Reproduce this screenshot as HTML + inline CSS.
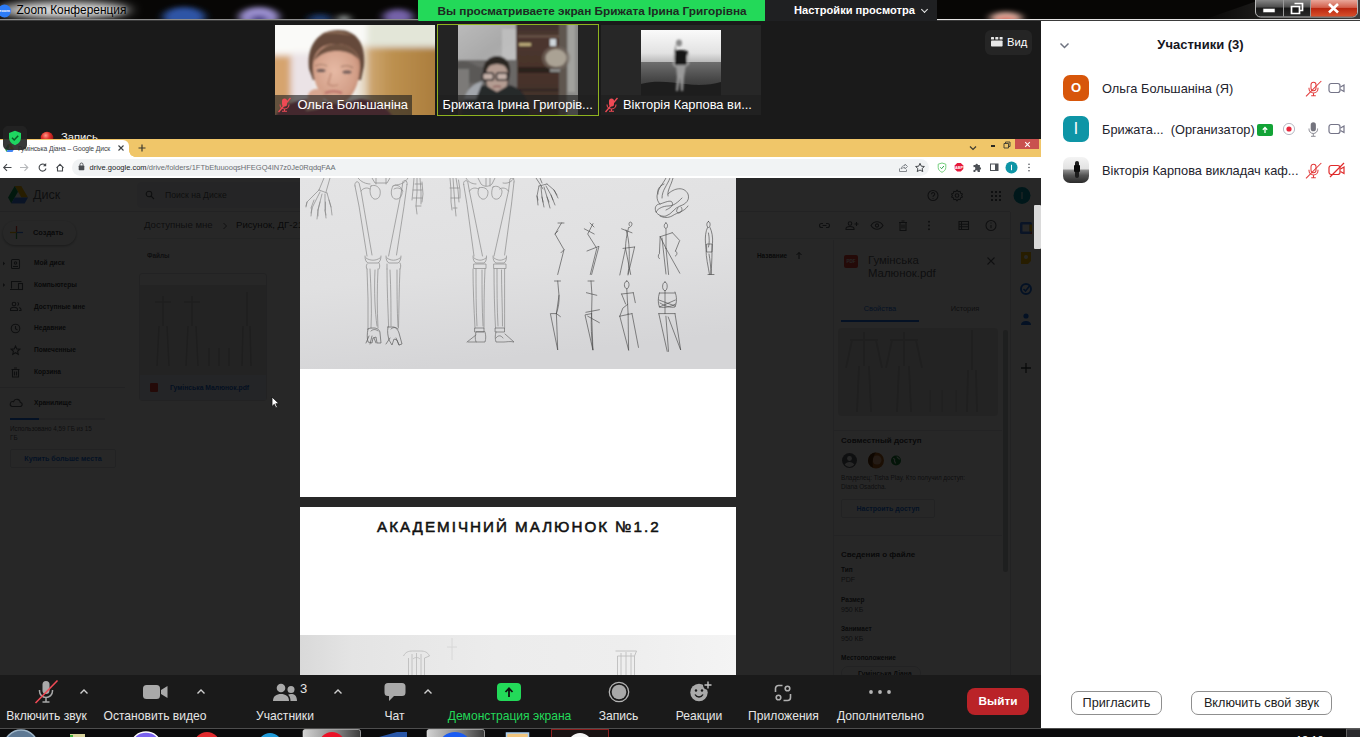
<!DOCTYPE html>
<html lang="ru">
<head>
<meta charset="utf-8">
<title>Zoom Конференция</title>
<style>
*{box-sizing:border-box;margin:0;padding:0}
html,body{width:1360px;height:737px;overflow:hidden;background:#1a1a1a;font-family:"Liberation Sans","DejaVu Sans",sans-serif;}
.abs{position:absolute}
#root{position:relative;width:1360px;height:737px;overflow:hidden;background:#1a1a1a}
/* title bar */
#titlebar{left:0;top:0;width:1360px;height:21px;background:#060606;overflow:hidden}
#titlebar .line{left:0;top:19px;width:1360px;height:2px;background:linear-gradient(#b9b9b9,#3a3a3a)}
#ttl{left:16.500px;top:1px;font-size:11.900px;color:#000;line-height:18px;white-space:nowrap;text-shadow:0 0 3px rgba(255,255,255,.5)}
#banner{left:418px;top:0;width:347px;height:22px;background:#23d959;color:#1d2b22;font-weight:bold;font-size:11.780px;line-height:21px;text-align:left;padding-left:19.500px;white-space:nowrap;border-radius:0 0 0 3px}
#viewopt{left:765px;top:0;width:172px;height:22px;background:#1f2022;color:#fff;font-weight:bold;font-size:11.100px;line-height:21px;white-space:nowrap;padding-left:29px}
#viewopt:after{content:"";position:absolute;left:157px;top:7px;width:4px;height:4px;border-right:1.600px solid #e8e8e8;border-bottom:1.600px solid #e8e8e8;transform:rotate(45deg)}
/* main */
#main{left:0;top:21px;width:1041px;height:654px;background:#1a1a1a}
/* panel */
#panel{left:1041px;top:21px;width:319px;height:707px;background:#fff}
/* toolbar */
#toolbar{left:0;top:675px;width:1041px;height:53px;background:#1a1a1a}
.tl{position:absolute;top:32.500px;font-size:12.100px;color:#e6e6e6;white-space:nowrap;transform:translateX(-50%);line-height:16px}
.nav{position:absolute;left:34px;font-size:6.600px;line-height:10px;font-weight:bold;color:#3c4043;white-space:nowrap}
.dl{left:841px;font-size:7px;line-height:9.700px;color:#5f6368;white-space:nowrap}.dl b{color:#3c4043;font-size:6.500px}
.av{left:22px;width:26px;height:26px;border-radius:7px;color:#fff;font-weight:bold;font-size:13px;line-height:26px;text-align:center}
.pn{left:61px;font-size:12.800px;line-height:20px;color:#23232d;white-space:nowrap}
.pb{top:670px;height:24px;border:1px solid #8f8f8f;border-radius:7px;font-size:12.700px;line-height:23px;text-align:center;color:#222;white-space:nowrap;background:#fff}
.lb{top:70px;height:20px;background:rgba(30,30,30,.62);color:#fff;font-size:12.880px;line-height:20px;white-space:nowrap;overflow:hidden}
/* taskbar */
#taskbar{left:0;top:728px;width:1360px;height:9px;background:#0b0b0c;overflow:hidden}
</style>
</head>
<body>
<div id="root">

<!-- ===== TITLE BAR ===== -->
<div id="titlebar" class="abs">
  <svg class="abs" style="left:0;top:0" width="1360" height="21" viewBox="0 0 1360 21">
   <defs><filter id="tb" x="-10%" y="-100%" width="120%" height="300%"><feGaussianBlur stdDeviation="4 2.500"/></filter><filter id="tg" x="-10%" y="-100%" width="120%" height="300%"><feGaussianBlur stdDeviation="7 4"/></filter>
   <linearGradient id="shine" x1="0" y1="0" x2="1" y2="0"><stop offset="0" stop-color="#fff" stop-opacity="0"/><stop offset="1" stop-color="#fff" stop-opacity=".22"/></linearGradient></defs>
   <rect width="1360" height="21" fill="#070605"/>
   <g filter="url(#tg)"><ellipse cx="64" cy="10" rx="66" ry="9" fill="#bdbdbd"/><ellipse cx="70" cy="10.500" rx="54" ry="6" fill="#dcdcdc"/></g>
   <g filter="url(#tb)"><ellipse cx="184" cy="17" rx="21" ry="10" fill="#2d55a6"/><ellipse cx="259" cy="17" rx="20" ry="10" fill="#9d92d2"/><ellipse cx="259" cy="20" rx="9" ry="5" fill="#4a3f86"/><ellipse cx="320" cy="19" rx="12" ry="5" fill="#1f3a6e"/><ellipse cx="344" cy="19" rx="6" ry="4" fill="#9aa0a0"/><ellipse cx="398" cy="17" rx="15" ry="8" fill="#7562a8"/><ellipse cx="1006" cy="18" rx="16" ry="6" fill="#e6b8a8"/><ellipse cx="1006" cy="20" rx="10" ry="3" fill="#d0564a"/></g>
   <path d="M1200 21L1260 0h100v21z" fill="url(#shine)"/>
   <rect x="0" y="19" width="1360" height="1" fill="#8d8d8d"/><rect x="0" y="20" width="1360" height="1" fill="#3b3b3b"/>
   <rect x="937" y="19" width="423" height="1" fill="#e4e4e4"/>
   <!-- zoom app icon -->
   <circle cx="4.500" cy="11" r="6.500" fill="#2d7cf6"/><text x="4.500" y="12.300" font-size="4.200" font-weight="bold" fill="#fff" text-anchor="middle" font-family="Liberation Sans, sans-serif">zoom</text>
   <!-- window controls -->
   <defs><linearGradient id="wcg" x1="0" y1="0" x2="0" y2="1"><stop offset="0" stop-color="#8d8d8d"/><stop offset=".45" stop-color="#4c4c4c"/><stop offset=".5" stop-color="#161616"/><stop offset="1" stop-color="#2a2a2a"/></linearGradient><linearGradient id="wcr" x1="0" y1="0" x2="0" y2="1"><stop offset="0" stop-color="#e9a79a"/><stop offset=".45" stop-color="#d2604c"/><stop offset=".5" stop-color="#b9260f"/><stop offset="1" stop-color="#d7502c"/></linearGradient></defs>
   <path d="M1255.500 -1v13a5 5 0 0 0 5 5h92a5 5 0 0 0 5-5V-1z" fill="url(#wcg)" stroke="#b9b9b9" stroke-width="1"/>
   <path d="M1311 0v16.500h41.500a4.500 4.500 0 0 0 4.500-4.500V0z" fill="url(#wcr)"/>
   <path d="M1283.500 0v16.500M1310.500 0v16.500" stroke="#9a9a9a" stroke-width="1"/>
   <rect x="1263" y="8.500" width="12" height="4" rx=".8" fill="#fff" stroke="#3a3a3a" stroke-width=".6"/>
   <path d="M1294.500 3.500h8v7h-2.500M1291.500 6.500h8v7h-8z" fill="none" stroke="#fff" stroke-width="1.700"/>
   <path d="M1329 4l9 8.500M1338 4l-9 8.500" stroke="#fff" stroke-width="2.600"/>
  </svg>
  <div id="ttl" class="abs">Zoom Конференция</div>
</div>
<div id="banner" class="abs">Вы просматриваете экран Брижата Ірина Григорівна</div>
<div id="viewopt" class="abs">Настройки просмотра</div>

<!-- ===== MAIN ===== -->
<div id="main" class="abs">
<div id="thumbs" class="abs" style="left:0;top:-21px;width:1041px;height:160px">
 <!-- thumb 1 -->
 <div class="abs" style="left:275px;top:25px;width:160px;height:90px;overflow:hidden;background:#e9e4dc">
  <svg class="abs" style="left:0;top:0" width="160" height="90" viewBox="0 0 160 90">
   <defs><filter id="b1" x="-20%" y="-20%" width="140%" height="140%"><feGaussianBlur stdDeviation="3"/></filter><filter id="b2" x="-20%" y="-20%" width="140%" height="140%"><feGaussianBlur stdDeviation="1.300"/></filter><filter id="b3" x="-20%" y="-20%" width="140%" height="140%"><feGaussianBlur stdDeviation=".8"/></filter>
   <linearGradient id="wd" x1="0" x2="1"><stop offset="0" stop-color="#d2ad7c"/><stop offset=".35" stop-color="#bd9150"/><stop offset="1" stop-color="#a87a3a"/></linearGradient>
   <radialGradient id="fc" cx=".45" cy=".45" r=".65"><stop offset="0" stop-color="#e6b9a4"/><stop offset=".7" stop-color="#d39f88"/><stop offset="1" stop-color="#b98068"/></radialGradient></defs>
   <rect width="160" height="90" fill="#efece8"/>
   <g filter="url(#b1)"><rect x="-5" y="-5" width="100" height="42" fill="#fafaf8"/><rect x="88" y="22" width="80" height="75" fill="url(#wd)"/><rect x="92" y="-4" width="70" height="25" fill="#e3e6d8"/><rect x="-6" y="30" width="24" height="66" fill="#d6a46e"/><rect x="16" y="28" width="24" height="50" fill="#ebe3e6"/><rect x="84" y="20" width="8" height="60" fill="#e6d9c4"/></g>
   <g filter="url(#b2)"><path d="M34 44c-3-24 10-39 29-39 18 0 28 13 26 36l-3 14H38z" fill="#65493a"/><path d="M46 9c8-4 22-4 32 2-8-2-24-3-32-2z" fill="#8a6a55"/><path d="M38 42c0-15 8-23 23-23 14 0 24 8 24 22 0 18-9 38-23 38S38 60 38 42z" fill="url(#fc)"/><path d="M39 36c3-11 12-17 23-17 10 0 19 5 22 16-6-7-14-9-22-9s-16 2-23 10z" fill="#6f5242"/><path d="M0 92c6-12 20-17 38-18l24 5 24-5c16 2 26 8 32 18z" fill="#80374a"/><path d="M33 70c2-6 9-8 14-4l2 8-6 10-12 2z" fill="#d8a690"/></g>
   <g filter="url(#b3)"><ellipse cx="46" cy="45.500" rx="4.500" ry="1.600" fill="#5a4a4a" opacity=".85"/><ellipse cx="72" cy="47" rx="4.500" ry="1.600" fill="#5a4a4a" opacity=".85"/><path d="M40 41c4-2 8-2 12 0M66 42c4-2 9-1.500 12 1" stroke="#8a6654" stroke-width="1.200" fill="none" opacity=".7"/><path d="M56 48l-3 11c2 2 7 2.500 10 .5" fill="none" stroke="#b57f6a" stroke-width="1.300" opacity=".8"/><path d="M50 68c5-2 12-2 17 0" stroke="#b0605e" stroke-width="2" fill="none" opacity=".8"/></g>
  </svg>
  <div class="abs lb" style="left:0;width:137px;padding-left:22.500px">Ольга Большаніна</div>
  <svg class="abs" style="left:2px;top:72px" width="15" height="16" viewBox="0 0 15 16"><rect x="5" y="1.500" width="5" height="8" rx="2.500" fill="#ef4a55"/><path d="M3 7.500a4.500 4.500 0 0 0 9 0M7.500 12v2M5 14.300h5" fill="none" stroke="#ef4a55" stroke-width="1.100"/><path d="M13.500 1L1.500 15" stroke="#ef4a55" stroke-width="1.300"/></svg>
 </div>
 <!-- thumb 2 -->
 <div class="abs" style="left:437px;top:24px;width:162px;height:92px;border:1px solid #8eb31f;background:#232323;overflow:hidden">
  <svg class="abs" style="left:20px;top:0" width="120" height="90" viewBox="0 0 120 90">
   <defs><linearGradient id="wl" x1="0" y1="0" x2="1" y2="1"><stop offset="0" stop-color="#bcbcbc"/><stop offset=".6" stop-color="#a9a9a9"/><stop offset="1" stop-color="#b8b8b8"/></linearGradient>
   <linearGradient id="cb" x1="0" y1="0" x2="0" y2="1"><stop offset="0" stop-color="#3a302e"/><stop offset=".15" stop-color="#4c362f"/><stop offset=".5" stop-color="#49332b"/><stop offset="1" stop-color="#3e2f28"/></linearGradient></defs>
   <rect width="120" height="90" fill="#46352e"/>
   <g filter="url(#b2)"><rect x="-3" y="-3" width="62" height="45" fill="url(#wl)"/><rect x="44" y="4" width="14" height="30" fill="#c4c4c4" opacity=".7"/><rect x="58" y="-3" width="52" height="96" fill="url(#cb)"/><rect x="60" y="10.500" width="46" height="1.800" fill="#6d5a4e"/><rect x="60" y="42" width="48" height="6" fill="#2a201c"/><rect x="60" y="64" width="48" height="2" fill="#2e2420"/><rect x="108" y="-3" width="15" height="96" fill="#8c8c8a"/><rect x="110" y="-3" width="7" height="70" fill="#a2a29e"/><rect x="101" y="-3" width="8" height="96" fill="#5e5650"/><ellipse cx="98" cy="33" rx="14" ry="12" fill="#7a6e64" opacity=".6"/><ellipse cx="98" cy="33" rx="10.500" ry="9" fill="#aaa294"/><rect x="92" y="14" width="6" height="7" fill="#cfd6da"/><rect x="61" y="18" width="12" height="3" fill="#b9a878"/><rect x="92" y="44" width="10" height="3" fill="#8a8a88"/><rect x="-3" y="35" width="62" height="42" fill="#6a6866"/><path d="M-3 38c8-3 14-2 20 2s12 2 18-2v20H-3z" fill="#5a5856"/><rect x="-3" y="44" width="14" height="30" fill="#7c7a78"/><path d="M25 47c0-11 7-16 14-16s14 5 13 17l-2 12H28z" fill="#2c2624"/><path d="M28 51c0-9 5-13 11-13s11 4 11 13c0 10-4 19-11 19S28 61 28 51z" fill="#b49c92"/><path d="M26 45c2-8 7-12 13-12s11 4 13 12c-4-4-8-6-13-6s-9 2-13 6z" fill="#2c2624"/><path d="M3 95c0-22 10-32 24-35l12 7 12-7c13 3 20 12 21 35z" fill="#28292c"/><path d="M6 74c3-10 10-16 19-18l-7 18z" fill="#a2a6ac"/><rect x="24.500" y="48" width="11" height="7" rx="1.800" fill="#c4b0a8" stroke="#1c1a1a" stroke-width="1.600"/><rect x="38.500" y="48" width="11" height="7" rx="1.800" fill="#c4b0a8" stroke="#1c1a1a" stroke-width="1.600"/><path d="M35 62c3-1 6-1 8 0" stroke="#8a5a58" stroke-width="1.500" fill="none"/></g>
  </svg>
  <div class="abs lb" style="left:0;top:70px;width:160px;padding-left:4.500px">Брижата Ірина Григорів...</div>
 </div>
 <!-- thumb 3 -->
 <div class="abs" style="left:601px;top:25px;width:160px;height:90px;overflow:hidden;background:#272727">
  <svg class="abs" style="left:40px;top:5px" width="80" height="66" viewBox="0 0 80 66">
   <defs><linearGradient id="sky" x1="0" y1="0" x2="0" y2="1"><stop offset="0" stop-color="#fafafa"/><stop offset=".7" stop-color="#e2e2e2"/><stop offset="1" stop-color="#b5b5b5"/></linearGradient><linearGradient id="sea" x1="0" y1="0" x2="0" y2="1"><stop offset="0" stop-color="#6e6e6e"/><stop offset=".5" stop-color="#484848"/><stop offset="1" stop-color="#2c2c2c"/></linearGradient></defs>
   <rect width="80" height="33" fill="url(#sky)"/><rect y="32" width="80" height="34" fill="url(#sea)"/>
   <path d="M0 54c14-4 30-2 44 0s26 1 36-2v14H0z" fill="#1d1d1d"/>
   <g filter="url(#b2)"><ellipse cx="38" cy="13" rx="3" ry="3.500" fill="#8a8a8a"/><path d="M34.500 14c-1 6-1.500 12-1 16l2.500 1z" fill="#6a6a6a"/><path d="M33.500 21c3-1.500 9-1.500 13 0l1 4-2 1v9H34z" fill="#141414"/><path d="M35 35h10l-2 12-1 14h-2l-1-14-2 14h-2l1-14z" fill="#9a9a9a"/><path d="M33.500 22l-1 12 2 3M46.500 24l1 9-2 3" fill="none" stroke="#b5b5b5" stroke-width="1.300"/></g>
  </svg>
  <div class="abs lb" style="left:0;width:160px;padding-left:22px">Вікторія Карпова ви...</div>
  <svg class="abs" style="left:3px;top:72px" width="15" height="16" viewBox="0 0 15 16"><rect x="5" y="1.500" width="5" height="8" rx="2.500" fill="#ef4a55"/><path d="M3 7.500a4.500 4.500 0 0 0 9 0M7.500 12v2M5 14.300h5" fill="none" stroke="#ef4a55" stroke-width="1.100"/><path d="M13.500 1L1.500 15" stroke="#ef4a55" stroke-width="1.300"/></svg>
 </div>
 <!-- view button -->
 <div class="abs" style="left:985px;top:30px;width:47px;height:25px;border-radius:6px;background:#252525"></div>
 <svg class="abs" style="left:991px;top:37px" width="12" height="10" viewBox="0 0 12 10" fill="#e8e8e8"><rect x="0" y="0" width="3" height="2.500" rx=".5"/><rect x="4.300" y="0" width="3" height="2.500" rx=".5"/><rect x="8.600" y="0" width="3" height="2.500" rx=".5"/><rect x="0" y="3.500" width="11.600" height="6" rx=".8"/></svg>
 <div class="abs" style="left:1007px;top:34px;font-size:11.200px;line-height:16px;color:#fff">Вид</div>
 <!-- recording indicator (behind shared window) -->
 <div class="abs" style="left:3px;top:126px;width:24px;height:24px;border-radius:5px;background:rgba(36,36,36,.9);z-index:5"></div>
 <svg class="abs" style="left:8px;top:130px;z-index:6" width="14" height="16" viewBox="0 0 14 16"><path d="M7 .8l6 2.200v4.500c0 3.800-2.500 6.300-6 7.700-3.500-1.400-6-3.900-6-7.700V3z" fill="#1ed760"/><path d="M4 7.800l2.200 2.200 4-4.300" fill="none" stroke="#0b5a26" stroke-width="1.500"/></svg>
 <svg class="abs" style="left:40px;top:131px" width="14" height="14" viewBox="0 0 14 14"><defs><radialGradient id="rb" cx=".4" cy=".3" r=".7"><stop offset="0" stop-color="#ff9a8a"/><stop offset=".45" stop-color="#e0302a"/><stop offset="1" stop-color="#8a1010"/></radialGradient></defs><circle cx="7" cy="7" r="6.300" fill="url(#rb)"/></svg>
 <div class="abs" style="left:61px;top:129px;font-size:11.200px;line-height:16px;color:#f2f2f2">Запись</div>
</div>

<div id="share" class="abs" style="left:0;top:-21px;width:1041px;height:696px;clip-path:inset(139px 0 0 0);">
 <!-- chrome tab strip -->
 <div class="abs" style="left:0;top:139px;width:1041px;height:18px;background:#f0c669"></div>
 <div class="abs" style="left:0;top:140px;width:129px;height:18px;background:#fff;border-radius:0 6px 0 0"></div>
 <div class="abs" style="left:127px;top:151px;width:8px;height:6px;background:radial-gradient(circle at 100% 0,#f0c669 5.5px,#fff 6px)"></div>
 <svg class="abs" style="left:5px;top:144px" width="9" height="8" viewBox="0 0 9 8"><path d="M3 0h3l3 5.2H6z" fill="#fbbc04"/><path d="M3 0L0 5.2 1.5 8l3-5.2z" fill="#34a853"/><path d="M1.5 8h6L9 5.2H3z" fill="#4285f4"/></svg>
 <div class="abs" style="left:18px;top:142.700px;font-size:6.740px;line-height:12px;color:#3c4043;white-space:nowrap;letter-spacing:-.1px">Гумінська Діана – Google Диск</div>
 <svg class="abs" style="left:117px;top:144px" width="8" height="8" viewBox="0 0 8 8"><path d="M1.5 1.5l5 5M6.500 1.500l-5 5" stroke="#3c4043" stroke-width="1.100" fill="none"/></svg>
 <svg class="abs" style="left:138px;top:144px" width="8" height="8" viewBox="0 0 8 8"><path d="M4 .5v7M.5 4h7" stroke="#3c3a30" stroke-width="1.200" fill="none"/></svg>
 <!-- window controls -->
 <svg class="abs" style="left:969px;top:145px" width="8" height="6" viewBox="0 0 8 6"><path d="M1 1.500l3 3 3-3" stroke="#3c3a30" stroke-width="1.200" fill="none"/></svg>
 <div class="abs" style="left:991px;top:145px;width:4px;height:1.500px;background:#2b2a22"></div>
 <svg class="abs" style="left:1003px;top:141px" width="8" height="8" viewBox="0 0 8 8"><path d="M1 2.500h4.500v4.500H1zM2.500 2.500V1h4.500v4.500H5.500" stroke="#3c3a30" stroke-width=".9" fill="none"/></svg>
 <div class="abs" style="left:1015px;top:139px;width:24px;height:10px;background:#c9514f"></div>
 <svg class="abs" style="left:1024px;top:141px" width="7" height="7" viewBox="0 0 7 7"><path d="M1.200 1.200l4.600 4.600M5.800 1.200L1.200 5.800" stroke="#fff" stroke-width="1.100" fill="none"/></svg>
 <!-- chrome toolbar -->
 <div class="abs" style="left:0;top:157px;width:1041px;height:21px;background:#fff"></div>
 <div class="abs" style="left:72px;top:159px;width:857px;height:17px;border-radius:9px;background:#f1f3f4"></div>
 <svg class="abs" style="left:1px;top:161px" width="70" height="13" viewBox="0 0 70 13">
  <g fill="none" stroke="#45484c" stroke-width="1.100"><path d="M10.500 6.500H3M6 3.200L2.700 6.500 6 9.800"/><path d="M19 6.500h7.500M23.500 3.200l3.300 3.300-3.300 3.300" stroke="#b6b8bb"/><path d="M44.200 4.200A3.500 3.500 0 1 0 45 7.500"/><path d="M55.500 6.800L59 3.300l3.500 3.500M56.500 6v4h5V6"/></g><path d="M45.200 2v3.200H42z" fill="#45484c"/></svg>
 <svg class="abs" style="left:78px;top:162px" width="7" height="9" viewBox="0 0 7 9"><rect x=".7" y="3.600" width="5.600" height="4.700" rx=".7" fill="#4b4e52"/><path d="M2 3.800V2.500a1.500 1.500 0 0 1 3 0v1.300" fill="none" stroke="#4b4e52" stroke-width=".9"/></svg>
 <div class="abs" style="left:89.500px;top:161.500px;font-size:7.500px;line-height:12px;color:#202124;white-space:nowrap">drive.google.com<span style="color:#6a6e73">/drive/folders/1FTbEfuuooqsHFEGQ4IN7z0Je0RqdqFAA</span></div>
 <svg class="abs" style="left:896px;top:160px" width="142" height="15" viewBox="0 0 142 15">
  <g fill="none" stroke="#5f6368" stroke-width="1"><path d="M3.500 8.500v3h7v-2M5 9c.5-2.500 2-3.500 4-3.500V4l2.500 2.500L9 9V7.500C7.500 7.500 6 8 5 9z" stroke="#85898e"/><path d="M24 3.300l1.300 2.900 3.100.3-2.300 2.100.7 3-2.800-1.600-2.800 1.600.7-3-2.300-2.100 3.100-.3z" stroke="#45484c"/></g>
  <path d="M46 3l3.800 1.200v3.300c0 2.300-1.700 3.800-3.800 4.800-2.100-1-3.800-2.500-3.800-4.800V4.200z" fill="#fff" stroke="#67c96f" stroke-width=".9"/><path d="M44.300 7.300l1.300 1.400 2.300-2.700" stroke="#2fa34a" stroke-width="1" fill="none"/>
  <path d="M61.200 3h3.600l2.500 2.500v3.600l-2.500 2.500h-3.600l-2.500-2.500V5.500z" fill="#e6183b"/><text x="63" y="9" font-size="3.800" font-weight="bold" fill="#fff" text-anchor="middle" font-family="Liberation Sans, sans-serif">ABP</text>
  <path d="M77.500 5h2a1.200 1.200 0 1 1 2.400 0h2v2.200a1.200 1.200 0 1 1 0 2.400V12h-2.300a1.200 1.200 0 1 0-2.200 0h-1.900V9.700a1.300 1.300 0 1 0 0-2.400z" fill="#4d5156"/>
  <rect x="94.500" y="4" width="7.500" height="6.500" fill="#fff" stroke="#4d5156" stroke-width="1"/><rect x="99" y="4" width="3" height="6.500" fill="#4d5156"/>
  <circle cx="115.500" cy="7.500" r="6" fill="#0e95a6"/><rect x="115" y="4.800" width="1" height="5.400" fill="#fff"/>
  <circle cx="133" cy="4.300" r=".8" fill="#4d5156"/><circle cx="133" cy="7.500" r=".8" fill="#4d5156"/><circle cx="133" cy="10.700" r=".8" fill="#4d5156"/>
 </svg>
 <!-- drive page (light) -->
 <div class="abs" id="drive" style="left:0;top:178px;width:1041px;height:497px;background:#fff;overflow:hidden;color:#5f6368">
  <div class="abs" style="left:0;top:0;width:1041px;height:497px;transform:translateY(-178px)">
   <!-- header -->
   <svg class="abs" style="left:8px;top:186px" width="20" height="18" viewBox="0 0 20 18"><path d="M6.700 0h6.600L20 11.600h-6.600z" fill="#fbbc04"/><path d="M6.700 0L0 11.600 3.300 17.400 10 5.800z" fill="#0f9d58"/><path d="M3.300 17.400h13.400L20 11.600H6.600z" fill="#4285f4"/></svg>
   <div class="abs" style="left:33px;top:187px;font-size:12.500px;line-height:16px;color:#5f6368">Диск</div>
   <div class="abs" style="left:137px;top:182px;width:390px;height:26px;border-radius:4px;background:#f1f3f4"></div>
   <svg class="abs" style="left:145px;top:190px" width="10" height="10" viewBox="0 0 10 10"><circle cx="4" cy="4" r="2.800" fill="none" stroke="#5f6368" stroke-width="1.100"/><path d="M6 6l3 3" stroke="#5f6368" stroke-width="1.100"/></svg>
   <div class="abs" style="left:165px;top:189px;font-size:8.600px;line-height:12px;color:#5f6368;white-space:nowrap">Поиск на Диске</div>
   <div class="abs" style="left:0;top:211px;width:1010px;height:1px;background:#dadce0"></div>
   <!-- create -->
   <div class="abs" style="left:3px;top:221px;width:73px;height:24px;border-radius:12px;background:#fff;box-shadow:0 1px 2px rgba(60,64,67,.3),0 1px 3px 1px rgba(60,64,67,.15)"></div>
   <svg class="abs" style="left:10px;top:226px" width="13" height="13" viewBox="0 0 13 13"><path d="M6.500 0v6.500" stroke="#ea4335" stroke-width="1.300"/><path d="M6.500 6.500V13" stroke="#34a853" stroke-width="1.300"/><path d="M0 6.500h6.500" stroke="#fbbc04" stroke-width="1.300"/><path d="M6.500 6.500H13" stroke="#4285f4" stroke-width="1.300"/></svg>
   <div class="abs" style="left:33px;top:227px;font-size:7.400px;line-height:11px;color:#3c4043;font-weight:bold">Создать</div>
   <!-- nav -->
   <div class="nav" style="top:258px">Мой диск</div>
   <div class="nav" style="top:280px">Компьютеры</div>
   <div class="nav" style="top:302px">Доступные мне</div>
   <div class="nav" style="top:323px">Недавние</div>
   <div class="nav" style="top:345px">Помеченные</div>
   <div class="nav" style="top:367px">Корзина</div>
   <div class="abs" style="left:0;top:387px;width:125px;height:1px;background:#dadce0"></div>
   <div class="nav" style="top:398px">Хранилище</div>
   <svg class="abs" style="left:2px;top:257px" width="26" height="156" viewBox="0 0 26 156" fill="none" stroke="#5f6368" stroke-width="1.100">
    <path d="M1 4.500l2.200 2-2.200 2z" fill="#5f6368" stroke="none"/><rect x="9.500" y="2.500" width="8" height="9" rx="1"/><path d="M11 9.500h5"/><circle cx="13.500" cy="6" r="1.200"/>
    <path d="M1 26l2.200 2-2.200 2z" fill="#5f6368" stroke="none"/><path d="M9.500 31.500v-7h10M8 32.500h8"/><rect x="16.500" y="26.500" width="4" height="6"/>
    <circle cx="12" cy="47" r="1.800"/><path d="M8.500 53.500v-1c0-1.500 2-2.200 3.500-2.200s3.500.7 3.500 2.200v1zM15.500 45.500c1.500.5 1.500 2.500 0 3M17 53.500h2v-1c0-1-.8-1.600-1.800-2"/>
    <circle cx="13.500" cy="71.500" r="4.300"/><path d="M13.500 69v2.800l2 1.200"/>
    <path d="M13.500 89l1.300 2.900 3.100.3-2.300 2.100.7 3-2.800-1.600-2.800 1.600.7-3-2.300-2.100 3.100-.3z"/>
    <path d="M10.500 112.500h6v7.500h-6zM9.500 112.500h8M12 111h3M12.500 114.500v4M14.500 114.500v4"/>
    <path d="M10 149.500h8a2 2 0 0 0 .3-4 3.500 3.500 0 0 0-6.800-.8A2.500 2.500 0 0 0 10 149.500z"/>
   </svg>
   <div class="abs" style="left:10px;top:418px;width:95px;height:2px;background:#e4e6ea"></div>
   <div class="abs" style="left:10px;top:418px;width:29px;height:2px;background:#1a73e8"></div>
   <div class="abs" style="left:10px;top:425px;width:84px;font-size:6.300px;line-height:8.500px;color:#5f6368">Использовано 4,59 ГБ из 15 ГБ</div>
   <div class="abs" style="left:10px;top:449px;width:106px;height:19px;border:1px solid #dadce0;border-radius:2px;font-size:7.200px;line-height:17px;color:#1a73e8;font-weight:bold;text-align:center;white-space:nowrap">Купить больше места</div>
   <!-- breadcrumbs -->
   <div class="abs" style="left:144px;top:219px;font-size:9.600px;line-height:12px;color:#5f6368;white-space:nowrap">Доступные мне</div>
   <svg class="abs" style="left:222px;top:222px" width="6" height="8" viewBox="0 0 6 8"><path d="M1.500 1l3 3-3 3" fill="none" stroke="#5f6368" stroke-width="1"/></svg>
   <div class="abs" style="left:236px;top:219px;font-size:9.600px;line-height:12px;color:#3c4043;white-space:nowrap">Рисунок, ДГ-21</div>
   <div class="abs" style="left:137px;top:238px;width:873px;height:1px;background:#e6e8eb"></div>
   <div class="abs" style="left:147px;top:251px;font-size:6.400px;line-height:9px;color:#5f6368;font-weight:bold">Файлы</div>
   <!-- file card -->
   <div class="abs" style="left:139px;top:273px;width:128px;height:128px;border:1px solid #dadce0;border-radius:3px;background:#fff"></div>
   <div class="abs" style="left:140px;top:285px;width:126px;height:90px;background:#e4e4e4"></div>
   <div class="abs" style="left:140px;top:375px;width:126px;height:25px;background:#e8f0fe"></div>
   <div class="abs" style="left:150px;top:383px;width:8px;height:9px;border-radius:1px;background:#ea4335"></div>
   <div class="abs" style="left:170px;top:383px;font-size:6.800px;line-height:10px;color:#1967d2;font-weight:bold;white-space:nowrap">Гумінська Малюнок.pdf</div>
   <svg class="abs" style="left:143px;top:288px" width="122" height="86" viewBox="0 0 122 86" fill="none" stroke="#9a9a9a" stroke-width="1.600" opacity=".45"><path d="M20 8v30M12 14h16M16 38l-2 40M24 38l2 40M49 8v30M41 14h16M45 38l-2 40M53 38l2 40M104 4v34M100 38l-1 40M107 38l1 40M66 60v18M76 60v18M86 60v18"/></svg>
   <!-- top right icons -->
   <svg class="abs" style="left:925px;top:187px" width="110" height="17" viewBox="0 0 110 17" fill="none" stroke="#5f6368" stroke-width="1.100">
    <circle cx="8" cy="8.500" r="5"/><path d="M6.500 7.200a1.600 1.600 0 1 1 2.300 1.400c-.6.300-.8.700-.8 1.300M8 11.200v.9"/>
    <circle cx="32" cy="8.500" r="1.800"/><path d="M32 3.200l1.200 1.500 1.900-.4.500 1.900 1.800.8-.8 1.500.8 1.500-1.800.8-.5 1.900-1.900-.4-1.200 1.500-1.200-1.500-1.900.4-.5-1.900-1.800-.8.800-1.500-.8-1.500 1.800-.8.500-1.900 1.900.4z"/>
    <g fill="#5f6368" stroke="none"><rect x="66" y="4" width="2" height="2"/><rect x="70" y="4" width="2" height="2"/><rect x="74" y="4" width="2" height="2"/><rect x="66" y="8" width="2" height="2"/><rect x="70" y="8" width="2" height="2"/><rect x="74" y="8" width="2" height="2"/><rect x="66" y="12" width="2" height="2"/><rect x="70" y="12" width="2" height="2"/><rect x="74" y="12" width="2" height="2"/></g>
    <circle cx="97" cy="8.500" r="8.500" fill="#0097a7" stroke="none"/><rect x="96.500" y="5" width="1" height="7" fill="#fff" stroke="none"/>
   </svg>
   <!-- action icons -->
   <svg class="abs" style="left:815px;top:217px" width="186" height="17" viewBox="0 0 186 17" fill="none" stroke="#5f6368" stroke-width="1.100">
    <path d="M8 6.500H6.500a2 2 0 0 0 0 4H8M11 6.500h1.500a2 2 0 0 1 0 4H11M7.500 8.500h4"/>
    <circle cx="35" cy="6.500" r="1.800"/><path d="M31 12.500v-.8c0-1.500 2.500-2.200 4-2.200s4 .7 4 2.200v.8zM41.500 5v4M39.500 7h4"/>
    <path d="M56 8.500c1.500-2.500 3.500-3.700 6-3.700s4.500 1.200 6 3.700c-1.500 2.500-3.500 3.700-6 3.700s-4.500-1.200-6-3.700z"/><circle cx="62" cy="8.500" r="1.600"/>
    <path d="M85 5.500h6v8h-6zM84 5.500h8M86.500 4h3M87 7.500v4M89 7.500v4"/>
    <g fill="#5f6368" stroke="none"><circle cx="114" cy="4.700" r="1"/><circle cx="114" cy="8.500" r="1"/><circle cx="114" cy="12.300" r="1"/></g>
    <path d="M144 4.500h9.500v8H144zM144 7.200h9.500M144 9.800h9.500M146.500 4.500v8"/>
    <circle cx="176" cy="8.500" r="5"/><path d="M176 8v3.300M176 5.600v1"/>
   </svg>
   <div class="abs" style="left:757px;top:251px;font-size:6.400px;line-height:9px;color:#3c4043;font-weight:bold">Название</div>
   <svg class="abs" style="left:795px;top:251px" width="8" height="9" viewBox="0 0 8 9"><path d="M4 8V1.500M1.500 4L4 1.500 6.500 4" fill="none" stroke="#3c4043" stroke-width="1"/></svg>
   <!-- details panel -->
   <div class="abs" style="left:833px;top:240px;width:176px;height:440px;background:#fff;border-left:1px solid #e3e5e8"></div>
   <div class="abs" style="left:844px;top:255px;width:14px;height:13px;border-radius:2px;background:#ea4335;color:#fff;font-size:4.500px;line-height:13px;font-weight:bold;text-align:center">PDF</div>
   <div class="abs" style="left:868px;top:254px;font-size:11.400px;line-height:13px;color:#5f6368;width:110px">Гумінська Малюнок.pdf</div>
   <svg class="abs" style="left:986px;top:256px" width="10" height="10" viewBox="0 0 10 10"><path d="M1.500 1.500l7 7M8.500 1.500l-7 7" stroke="#5f6368" stroke-width="1.100" fill="none"/></svg>
   <div class="abs" style="left:841px;top:303px;width:78px;text-align:center;font-size:7.400px;line-height:11px;color:#1a73e8">Свойства</div>
   <div class="abs" style="left:926px;top:303px;width:78px;text-align:center;font-size:7.400px;line-height:11px;color:#5f6368">История</div>
   <div class="abs" style="left:841px;top:320px;width:78px;height:2px;background:#1a73e8"></div>
   <div class="abs" style="left:838px;top:328px;width:160px;height:88px;border-radius:3px;background:#e6e6e6;overflow:hidden">
    <svg class="abs" style="left:0;top:0" width="160" height="88" viewBox="0 0 160 88" fill="none" stroke="#a2a2a2" stroke-width="2" opacity=".45"><path d="M26 4v34M12 12h28M14 12l-6 28M38 12l6 28M21 38l-2 46M31 38l2 46M66 4v34M52 12h28M54 12l-6 28M78 12l6 28M61 38l-2 46M71 38l2 46M134 2v40M130 42l-1 42M138 42l1 42"/><path d="M92 62v22M104 62v22M118 62v22" stroke-width="1.200"/></svg>
   </div>
   <div class="abs" style="left:1003px;top:330px;width:5px;height:242px;border-radius:2px;background:#c4c7c9"></div>
   <div class="abs" style="left:834px;top:430px;width:168px;height:1px;background:#e3e5e8"></div>
   <div class="abs" style="left:841px;top:435px;font-size:8px;line-height:11px;color:#3c4043;font-weight:bold;white-space:nowrap">Совместный доступ</div>
   <svg class="abs" style="left:841px;top:452px" width="62" height="17" viewBox="0 0 62 17"><circle cx="8.500" cy="8.500" r="7.500" fill="#5f6368"/><circle cx="8.500" cy="6.500" r="2.400" fill="#fff"/><path d="M3.800 12.800c.8-2 2.700-2.800 4.700-2.800s3.900.8 4.700 2.800a6.300 6.300 0 0 1-9.400 0z" fill="#fff"/><circle cx="35" cy="8.500" r="8" fill="#b5651d"/><circle cx="36" cy="8" r="4.500" fill="#e8b08c"/><path d="M27 8.500a8 8 0 0 1 8-8c-3 3-4 9-3 15a8 8 0 0 1-5-7z" fill="#5a2d0c"/><circle cx="55" cy="8.500" r="5" fill="#188038"/><path d="M52 6.500c1.500 0 2 1 1.500 2s1 1.500 1 3M56 4.500c0 1.500 2 1.500 2.500 3" stroke="#e6f4ea" stroke-width="1.200" fill="none"/></svg>
   <div class="abs" style="left:841px;top:473px;width:138px;font-size:6.300px;line-height:9px;color:#5f6368">Владелец: Tisha Play. Кто получил доступ: Diana Osadcha.</div>
   <div class="abs" style="left:841px;top:499px;width:94px;height:19px;border:1px solid #dadce0;border-radius:2px;font-size:7px;line-height:17px;color:#1a73e8;font-weight:bold;text-align:center;white-space:nowrap">Настроить доступ</div>
   <div class="abs" style="left:834px;top:535px;width:168px;height:1px;background:#e3e5e8"></div>
   <div class="abs" style="left:841px;top:549px;font-size:8px;line-height:11px;color:#3c4043;font-weight:bold;white-space:nowrap">Сведения о файле</div>
   <div class="abs dl" style="top:565px"><b>Тип</b><br>PDF</div>
   <div class="abs dl" style="top:595px"><b>Размер</b><br>950 КБ</div>
   <div class="abs dl" style="top:624px"><b>Занимает</b><br>950 КБ</div>
   <div class="abs dl" style="top:653px"><b>Местоположение</b></div>
   <div class="abs" style="left:841px;top:666px;width:80px;height:14px;border:1px solid #dadce0;border-radius:7px;font-size:6.800px;line-height:13px;color:#3c4043;font-weight:bold;padding-left:16px;white-space:nowrap">Гумінська Діана</div>
   <!-- side panel -->
   <div class="abs" style="left:1010px;top:212px;width:1px;height:470px;background:#dadce0"></div>
   <svg class="abs" style="left:1018px;top:219px" width="16" height="158" viewBox="0 0 16 158">
    <rect x="2" y="3" width="12" height="12" rx="1.500" fill="#4285f4"/><rect x="4.500" y="5.500" width="7" height="7" fill="#fff"/><path d="M11.500 15l2.500-2.500v2.500z" fill="#ea4335"/><rect x="11.500" y="5.500" width="2.500" height="7" fill="#fbbc04"/>
    <path d="M3 33h10v9l-3 3H3z" fill="#fbbc04"/><circle cx="8" cy="38" r="2" fill="#fff"/>
    <circle cx="8" cy="70" r="5" fill="none" stroke="#1a73e8" stroke-width="2"/><path d="M5.500 70l2 2 4-5" stroke="#1a73e8" stroke-width="1.600" fill="none"/>
    <circle cx="8" cy="97" r="2.600" fill="#1a73e8"/><path d="M3 106c0-3 2.500-4 5-4s5 1 5 4z" fill="#1a73e8"/>
    <path d="M8 144v10M3 149h10" stroke="#3c4043" stroke-width="1.300"/>
   </svg>

  </div>
 </div>

 <!-- preview overlay -->
 <div class="abs" style="left:0;top:178px;width:1041px;height:497px;background:rgba(0,0,0,.848)"></div>
 <!-- viewer scrollbar -->
 <div class="abs" style="left:1034px;top:205px;width:7px;height:44px;background:#dadada;border-radius:1px"></div>
 <!-- pdf page 1 -->
 <div class="abs" style="left:300px;top:178px;width:436px;height:319px;background:#fff;overflow:hidden">
  <div class="abs" style="left:0;top:0;width:436px;height:191px;background:linear-gradient(180deg,#dedede 0%,#e2e2e2 60%,#dadada 100%)">
   <svg class="abs" style="left:0;top:0" width="436" height="191" viewBox="0 0 436 191" fill="none" stroke-linecap="round" stroke-linejoin="round">
    <defs><filter id="sk" x="-5%" y="-5%" width="110%" height="110%"><feGaussianBlur stdDeviation=".35"/></filter><linearGradient id="pap" x1="0" y1="0" x2=".25" y2="1"><stop offset="0" stop-color="#e4e4e5"/><stop offset=".55" stop-color="#e0e0e1"/><stop offset="1" stop-color="#d5d5d7"/></linearGradient></defs>
    <rect width="436" height="191" fill="url(#pap)" stroke="none"/>
    <g filter="url(#sk)" stroke="#8a8a8a" stroke-width=".7">
     <!-- skeleton 1 : pelvis bits -->
     <path d="M58 0c3 4 8 6 12 6M108 0c-3 5-8 7-13 7M72 0l3 5h12l3-5M76 0v6M86 0v6M71 8c-2 4-1 11 3 13 5 1 7-4 6-9-1-3-5-6-9-4zM93 8c3-2 8 0 9 4 1 5-2 10-7 9-4-1-5-8-2-13z"/>
     <!-- femurs -->
     <path d="M55 8c-1-3 2-6 4-3l2 8 11 64M55 8l4 20 8 50M107 6.500c1-3-2-5.500-4-3l-1.500 9.500L88.600 78M107 6.500l-3 22L96.500 77M61 13c2-3 6-4 9-2M103 13c-2-3-6-4-9-2"/>
     <!-- knees -->
     <path d="M65 78c0 4 1 6 3 7h10c2-1 3-4 3-7M66 80c4 3 10 3 14 0M67 86c-1 2-1 4 0 5M79 85c1 2 1 4 0 6M86 78c0 4 1 6 3 7h9c2-1 3-4 3-7M87 80c4 3 9 3 13 0M87 86v5M100 85c1 2 1 4 0 6"/>
     <!-- tibia/fibula -->
     <path d="M67 91l1 30v30M70 91c1 20 2 40 1 59M78 91c-1 20-1 40 0 59M75 92c-1 22 0 42 2 56M87 91c0 20 1 40 1.600 57.600M90 92c1 20 1 38 1 56M100 91c-1 20-1 40-1.500 59M97 92c0 20 0 40 1 57"/>
     <!-- feet -->
     <path d="M68 151c-1 5-1 9 0 13l4 1 1-5 3-1 1 6h4l-1-10c0-3-3-5-6-5-3 0-5 0-6 1zM66 165l3-7M70 166l2-8M74 160l2 5M88 149c-1 5 0 9 1 13l3 5 2-6 3 1 2 5 3-1-3-11c-1-3-3-6-6-6-2 0-4 0-5 0zM86 166l4-6M99 167l-3-7M71 153c2-2 5-2 7 0M91 151c2-2 5-2 7 0" stroke="#5f5f5f"/>
     <!-- left hand -->
     <path d="M24 0l-5 12M30 0l-4 14M19 12l-12 12-1 5M20 14l-8 16-1 8M22 16l-4 16-1 9M25 16v16l1 8M27 15l4 14 1 8M19 12l8 3M12 30l-1 5M18 32v6M25 32l1 5M7 24l-1 4M14 22l-3 8M20 24l-2 8M25.500 24v8M29 22l2 7"/>
     <!-- right hand of skel 1 -->
     <path d="M114 0l-1 12-1 10M117 0v14l-1 14 1 8M120 0l1 14v12M122 4l1 12-1 8M113 12h9M113 20h9M116 28h5M115 6h7"/>
     <!-- hand of skel 2 -->
     <path d="M150 0l1 12v12l1 8M153 0l1 14 1 14 1 10M156 0l2 12 1 12M158.500 2l1.500 10v8M150 10h9M151 20h8M153 30h4"/>
     <!-- skeleton 2 : pelvis -->
     <path d="M166 0c2 4 6 6 10 6M214 0c-2 4-7 6-11 5M178 0l3 6c3 3 8 3 11 0l3-6M186 0v8M190 0v8M179 10c-2 4-1 9 3 11 4 1 6-3 6-7 0-3-5-6-9-4zM193 9c3-2 8 0 9 4 0 5-3 9-7 8-4-1-4-8-2-12z"/>
     <path d="M163.700 6.500c-1-3 2-5 4-3l1.700 9.500 13.100 65M163.700 6.500l3.300 20 7 51.500M214 4c1-3-2-5-4-3l-1.500 12L194 78M214 4l-2.500 22-6.900 51M169.400 13c2-3 6-4 9-2M208.500 13c-2-3-6-4-9-2"/>
     <path d="M173 78c0 4 1 6 3 7h8c2-1 2.500-4 2.500-7M174 80c4 3 8 3 12 0M174 86h12v4.500h-12zM193 78c0 4 1 6 3 7h8c2-1 2.500-4 2.500-7M194 80c4 3 8 3 12 0M194 86h12v4.500h-12z"/>
     <path d="M173 91c0 20 1 40 2 59M176 91c0 20 0 40 1 57M185 91c-1 20-1 40-1 59M182 92c0 20 0 38 1 56M194 91c0 20 .500 40 1.500 59M197 91c0 20 0 40 1 57M204.600 91c0 20 0 40 0 59M201.500 92c0 20 1 38 1 56"/>
     <path d="M175 150h9v4h-9zM176 154c-1 3-1 7 0 10h9c1-3 1-7 0-10zM167 164l9-7M168 164h8M195.500 150h9v4h-9zM196 154c-1 3-1 7 0 10h8c2 0 6-1 10 0l-9-8M196 160c2-3 5-3 7 0" stroke="#6a6a6a"/>
    </g>
    <g filter="url(#sk)" stroke="#4a4a4a" stroke-width=".65">
     <!-- hand bones top -->
     <path d="M236 0l4 6 3 5M240 0l2 5M239 8l-2 10 1 9M241 9l1 10 2 10M244 9l3 10 3 11M246 8l5 9 4 10M247 6l7 6 4 8M239 8l8-2M237 18l1 4M242 19l1 5M247 19l2 5M251 17l2 5M254 12l3 5" stroke-width=".6"/>
     <!-- pelvis side -->
     <path d="M366 0c-3 6-8 10-9 18 0 4 1 6 3 8M370 0c-3 8-8 12-8 20M373 0c-2 8-6 12-5 18M364 6c-5 2-7 6-6 10M368 16c6-6 16-8 20 0 2 6-2 10-8 12-6 2-8 8-14 10-4 1-8-1-10-4 2-4 8-6 12-6 6 0 10-4 14-8M356 34c-2-4 0-8 4-8 6-2 10-4 12-2 2 4-2 6-6 8M378 30c-2 2-2 5 1 5 3-1 4-4 2-6M360 38c4 2 8 2 12 0 6-4 12-4 16-10"/>
     <!-- row1 fig1 -->
     <path d="M258 45h6M261.600 44.800L255 56l9 15.700-6.300 24.800M255 56l3-3M264 71.700l-3 3"/>
     <!-- row1 fig2 -->
     <path d="M293 45.600L287.700 56l9.100 14.400-6.500 26.100M284.300 50.800L294.200 56M287 73l12-4.700-7.400 28.200M290 45l4 4"/>
     <!-- row1 fig3 -->
     <path d="M329.400 47.500c-1.500-3 1-4.500 2.500-2.500.5 2-1 4-2.500 4.500M328.600 49.500c-2 8-3 14-3.100 20.900l5.200 26.100M321.600 50.800l10.400 4M323 70.400l11.600-1.400M325.500 70.400l-5.700 26.600M334.600 69l-6.600 28M326 52c4 10 4 30 2 44"/>
     <!-- row1 fig4 -->
     <path d="M365.900 45c-2 0-2.500 5 0 5.500 2.200-.5 2.200-5.500 0-5.500zM366 51v19M360.200 58.700l12.200-4M372.400 54.700l7.300 7.800-4.200 10.500M360.200 58.700l-.8 17c-1.500 1-1.500 4 0 5M360.200 58.700l5.800 11.700M366 70.400l2.600 26.100M366 70.400l13.800 24.800M362 60l4 36M375.500 73c2 1 2 4 0 5"/>
     <!-- row1 fig5 side -->
     <path d="M408.500 43.500c-2 0-2.500 5 0 6 2.200-.5 2.200-6 0-6zM407.500 49.500c-2 4-2.500 10-2 16l.5 6c0 8 2 16 3.500 25M410 49.500c2 4 3 10 2.500 16l-.5 8c0 8-.5 15-1 23M408 96.500h6M407 66h5v8h-5zM408.500 55c1 6 1 10 0 14M409 76c1 6 2 14 2 20"/>
     <!-- row2 fig1 -->
     <path d="M254.500 103h6M257.700 103l1.300 14.300-2.600 18.300h-6L257.700 172l-1.300-36.400M256.400 135.600l4 3M259 117.300c.5 6-.5 12-2.600 18.300"/>
     <!-- row2 fig2 -->
     <path d="M288 103h6M291 103l1 14.300-.4 18.300-6.600 1.300 7.900 35.100-1.300-36.400M286.400 114.700l10.400 2.600M285.900 134.300l13.500-2.600M287.700 138.200l11.700 6.500M291.600 135.600c-1 12 0 24 1.300 36.400"/>
     <!-- row2 fig3 -->
     <path d="M326.800 103c-3 0-3.500 7 0 7.800 3-.8 3-7.800 0-7.800zM326.800 110.800l1.300 24.800M321.600 116l11.700-1.300M319.800 138.200l12.200-2.600M319.800 138.200l8.800 33.800M332 135.600l6.500 33.800M328.100 135.600l.5 36.400M321.600 116l4 10M333.300 114.700l2 10M319.800 138.200l3-8 5-4"/>
     <!-- row2 fig4 -->
     <path d="M365 104c-3 0-3.500 8 0 8.800 3-.8 3-8.800 0-8.800zM365 112.800v22.800M359.400 115c-1.500 5-1.500 10 0 14 5 1 11 0 16-3M375 114c2 5 2 10 0 15-5 1-10-1-15-4M359.400 115h15.600M358.800 135.600h16.200M358.800 135.600l8.400 37.800M375 135.600l5.700 36.400-12.500-33M365.900 138.200l2.600 35.200M359 122l16 6M359.400 129l16-7"/>
    </g>
   </svg>

  </div>
 </div>
 <!-- pdf page 2 -->
 <div class="abs" style="left:300px;top:507px;width:436px;height:168px;background:#fff;overflow:hidden">
  <div id="h2" class="abs" style="left:77px;top:10px;font-size:15.200px;line-height:20px;font-weight:normal;-webkit-text-stroke:.55px #111;color:#111;letter-spacing:2.000px;white-space:nowrap">АКАДЕМІЧНИЙ МАЛЮНОК №1.2</div>
  <div class="abs" style="left:0;top:128px;width:436px;height:40px;background:linear-gradient(90deg,#d9d9d9 0%,#e4e4e4 12%,#ececec 45%,#eeeeee 75%,#f4f4f4 100%)">
   <svg class="abs" style="left:0;top:0" width="436" height="40" viewBox="0 0 436 40" fill="none" stroke="#bdbdbd" stroke-width=".9">
    <defs><filter id="sk2"><feGaussianBlur stdDeviation=".6"/></filter></defs>
    <g filter="url(#sk2)"><path d="M103.500 21c2-4 5-5 9-5h8c4 0 7 1 9 5l-5 2v17M108.500 23v17M112 19v21M121 19v21M116.500 18v22M113 24c2-2 5-2 7 0M315.500 16h21l-2 5v19M317.500 21v19M321 18v22M331 18v22M326 17v23M317.500 21h17"/><path d="M152 3v22M147 12h10" stroke="#d6d6d6"/></g>
   </svg>

  </div>
 </div>
 <!-- cursor -->
 <svg class="abs" style="left:271px;top:396px" width="9" height="13" viewBox="0 0 9 13"><path d="M1 1v9.500l2.300-2.200 1.600 3.600 1.500-.7-1.600-3.500H8z" fill="#fff" stroke="#111" stroke-width=".8"/></svg>

</div>

</div>

<!-- ===== PANEL ===== -->
<div id="panel" class="abs">
 <svg class="abs" style="left:18px;top:20.500px" width="12" height="8" viewBox="0 0 12 8"><path d="M1.500 1.500l4 4 4-4" fill="none" stroke="#6e7380" stroke-width="1.500"/></svg>
 <div id="ptitle" class="abs" style="left:0;top:14.600px;width:319px;text-align:center;font-size:13px;line-height:18px;font-weight:bold;color:#16161d;white-space:nowrap">Участники (3)</div>
 <!-- row 1 -->
 <div class="abs av" style="top:54px;background:#d7560a">O</div>
 <div class="abs pn" style="top:58px">Ольга Большаніна (Я)</div>
 <svg class="abs" style="left:264px;top:58.500px" width="18" height="18" viewBox="0 0 18 18"><g fill="none" stroke="#e23a3a" stroke-width="1.050"><rect x="6" y="2.200" width="5" height="8.600" rx="2.500"/><path d="M4 7.800v.6a4.500 4.500 0 0 0 9 0v-.6M8.500 13v2.600M6.200 15.800h4.600"/><path d="M16.300 1L1 16.300"/></g></svg>
 <svg class="abs" style="left:287px;top:61px" width="18" height="12" viewBox="0 0 18 12"><g fill="none" stroke="#747487" stroke-width="1.200"><rect x="1" y="1.500" width="11" height="9" rx="2.200"/><path d="M12.500 5l3.500-2v6.500l-3.500-2"/></g></svg>
 <!-- row 2 -->
 <div class="abs av" style="top:95px;background:#0e95a6;font-weight:normal;font-size:17px">l</div>
 <div class="abs pn" style="top:99px">Брижата...&nbsp; (Организатор)</div>
 <div class="abs" style="left:216px;top:102.500px;width:16px;height:12px;border-radius:2px;background:#12a336"></div>
 <svg class="abs" style="left:220px;top:105px" width="8" height="8" viewBox="0 0 8 8"><path d="M4 7V1.800M1.800 3.800L4 1.500l2.200 2.300" fill="none" stroke="#fff" stroke-width="1.300"/></svg>
 <svg class="abs" style="left:241px;top:101px" width="14" height="14" viewBox="0 0 14 14"><circle cx="7" cy="7" r="5.600" fill="#fff" stroke="#b8b8c2" stroke-width="1"/><circle cx="7" cy="7" r="2.600" fill="#e8273c"/></svg>
 <svg class="abs" style="left:265px;top:100px" width="15" height="18" viewBox="0 0 15 18"><rect x="4.700" y="1.300" width="5.200" height="9" rx="2.600" fill="#74747e"/><path d="M3 7.500v.7a4.300 4.300 0 0 0 8.600 0v-.7M7.300 12.500v2.500M5 15.300h4.600" fill="none" stroke="#8a8a93" stroke-width="1"/></svg>
 <svg class="abs" style="left:287px;top:102px" width="18" height="12" viewBox="0 0 18 12"><g fill="none" stroke="#747487" stroke-width="1.200"><rect x="1" y="1.500" width="11" height="9" rx="2.200"/><path d="M12.500 5l3.500-2v6.500l-3.500-2"/></g></svg>
 <!-- row 3 -->
 <div class="abs av" style="top:136px;background:linear-gradient(180deg,#f4f4f4 0%,#e2e2e2 45%,#8a8a8a 52%,#555 70%,#2a2a2a 100%);overflow:hidden"><div class="abs" style="left:12px;top:4px;width:4px;height:17px;background:#1c1c1c;border-radius:2px"></div><div class="abs" style="left:11px;top:8px;width:6px;height:7px;background:#0c0c0c;border-radius:1px"></div></div>
 <div class="abs pn" style="top:140px">Вікторія Карпова викладач каф...</div>
 <svg class="abs" style="left:264px;top:140.500px" width="18" height="18" viewBox="0 0 18 18"><g fill="none" stroke="#e23a3a" stroke-width="1.050"><rect x="6" y="2.200" width="5" height="8.600" rx="2.500"/><path d="M4 7.800v.6a4.500 4.500 0 0 0 9 0v-.6M8.500 13v2.600M6.200 15.800h4.600"/><path d="M16.300 1L1 16.300"/></g></svg>
 <svg class="abs" style="left:287px;top:141px" width="19" height="16" viewBox="0 0 19 16"><g fill="none" stroke="#e02b2b" stroke-width="1.200"><rect x="1" y="3.500" width="11" height="9" rx="2.200"/><path d="M12.500 7l3.500-2v6.500l-3.500-2"/><path d="M16 1L2 15"/></g></svg>
 <!-- buttons -->
 <div class="abs pb" style="left:30px;width:91px">Пригласить</div>
 <div class="abs pb" style="left:150px;width:141px">Включить свой звук</div>

</div>

<!-- ===== TOOLBAR ===== -->
<div id="toolbar" class="abs">
 <!-- mic muted -->
 <svg class="abs" style="left:33px;top:4px" width="26" height="26" viewBox="0 0 26 26"><rect x="9.500" y="2" width="7" height="13" rx="3.500" fill="#a9a9a9"/><path d="M6.500 11v1a6.500 6.500 0 0 0 13 0v-1M13 18.500v4M9.500 23h7" fill="none" stroke="#a9a9a9" stroke-width="1.500"/><path d="M24.500 1.500L2.500 24" stroke="#ef4a55" stroke-width="1.600"/></svg>
 <div class="tl" style="left:46.500px">Включить звук</div>
 <svg class="abs car" style="left:79px;top:13px" width="10" height="7" viewBox="0 0 10 7"><path d="M1.500 5.500l3.500-3.500 3.500 3.500" fill="none" stroke="#cfcfcf" stroke-width="1.400"/></svg>
 <!-- video -->
 <svg class="abs" style="left:142px;top:9px" width="27" height="16" viewBox="0 0 27 16"><rect x="1" y="1" width="17" height="14" rx="3.500" fill="#a9a9a9"/><path d="M19 6l6.500-4v12L19 10z" fill="#a9a9a9"/></svg>
 <div class="tl" style="left:155px">Остановить видео</div>
 <svg class="abs car" style="left:196px;top:13px" width="10" height="7" viewBox="0 0 10 7"><path d="M1.500 5.500l3.500-3.500 3.500 3.500" fill="none" stroke="#cfcfcf" stroke-width="1.400"/></svg>
 <!-- participants -->
 <svg class="abs" style="left:272px;top:8px" width="26" height="19" viewBox="0 0 26 19"><circle cx="9" cy="5" r="4.300" fill="#a9a9a9"/><path d="M1 18c0-5 3.500-7 8-7s8 2 8 7z" fill="#a9a9a9"/><circle cx="19" cy="6.500" r="3.500" fill="#a9a9a9"/><path d="M18.500 18c0-3-.8-5-2.500-6.300 1-.5 2-.7 3-.7 3.500 0 6 1.800 6 7z" fill="#a9a9a9"/></svg>
 <div class="abs" style="left:300px;top:7px;font-size:13px;line-height:14px;color:#e6e6e6">3</div>
 <div class="tl" style="left:285px">Участники</div>
 <svg class="abs car" style="left:333px;top:13px" width="10" height="7" viewBox="0 0 10 7"><path d="M1.500 5.500l3.500-3.500 3.500 3.500" fill="none" stroke="#cfcfcf" stroke-width="1.400"/></svg>
 <!-- chat -->
 <svg class="abs" style="left:384px;top:7px" width="22" height="20" viewBox="0 0 22 20"><path d="M4 1h14a3.500 3.500 0 0 1 3.500 3.500v6A3.500 3.500 0 0 1 18 14h-8l-5 5v-5H4A3.500 3.500 0 0 1 .5 10.500v-6A3.500 3.500 0 0 1 4 1z" fill="#a9a9a9"/></svg>
 <div class="tl" style="left:394.500px">Чат</div>
 <svg class="abs car" style="left:423px;top:13px" width="10" height="7" viewBox="0 0 10 7"><path d="M1.500 5.500l3.500-3.500 3.500 3.500" fill="none" stroke="#cfcfcf" stroke-width="1.400"/></svg>
 <!-- share -->
 <div class="abs" style="left:497px;top:8px;width:24px;height:18px;border-radius:4px;background:#23d959"></div>
 <svg class="abs" style="left:503px;top:11px" width="12" height="12" viewBox="0 0 12 12"><path d="M6 11V2.500M2.500 6L6 2.300 9.500 6" fill="none" stroke="#111" stroke-width="1.800"/></svg>
 <div class="tl" style="left:509.500px;color:#23d959">Демонстрация экрана</div>
 <!-- record -->
 <svg class="abs" style="left:608px;top:6px" width="22" height="22" viewBox="0 0 22 22"><circle cx="11" cy="11" r="9.700" fill="none" stroke="#b4b4b4" stroke-width="1.300"/><circle cx="11" cy="11" r="7.300" fill="#a9a9a9"/></svg>
 <div class="tl" style="left:618.500px">Запись</div>
 <!-- reactions -->
 <svg class="abs" style="left:689px;top:5px" width="24" height="23" viewBox="0 0 24 23"><circle cx="10" cy="12.500" r="8.700" fill="#a9a9a9"/><circle cx="19" cy="5" r="5" fill="#1a1a1a"/><path d="M19 1.500v7M15.500 5h7" stroke="#c4c4c4" stroke-width="1.400"/><circle cx="7" cy="10.500" r="1.200" fill="#1a1a1a"/><circle cx="13" cy="10.500" r="1.200" fill="#1a1a1a"/><path d="M6 14.500c1 1.800 2.500 2.500 4 2.500s3-.7 4-2.500" fill="none" stroke="#1a1a1a" stroke-width="1.400"/></svg>
 <div class="tl" style="left:699px">Реакции</div>
 <!-- apps -->
 <svg class="abs" style="left:773px;top:8px" width="20" height="20" viewBox="0 0 20 20" fill="none" stroke="#b0b0b0" stroke-width="1.600"><path d="M9.500 2.500H5.500a3 3 0 0 0-3 3V9M10.500 17.500h4a3 3 0 0 0 3-3V11"/><circle cx="14.500" cy="5.500" r="2.300"/><circle cx="5.500" cy="14.500" r="2.300"/></svg>
 <div class="tl" style="left:783.500px">Приложения</div>
 <!-- more -->
 <svg class="abs" style="left:868px;top:14px" width="24" height="6" viewBox="0 0 24 6"><circle cx="3" cy="3" r="1.900" fill="#b4b4b4"/><circle cx="12" cy="3" r="1.900" fill="#b4b4b4"/><circle cx="21" cy="3" r="1.900" fill="#b4b4b4"/></svg>
 <div class="tl" style="left:880.500px">Дополнительно</div>
 <!-- leave -->
 <div class="abs" style="left:967px;top:13px;width:62px;height:27px;border-radius:8px;background:#ba2328;color:#fff;font-weight:bold;font-size:11.800px;line-height:26px;text-align:center">Выйти</div>

</div>

<!-- ===== TASKBAR ===== -->
<div id="taskbar" class="abs">
 <svg class="abs" style="left:0;top:0" width="1360" height="9" viewBox="0 0 1360 9">
  <defs><linearGradient id="ab" x1="0" x2="1"><stop offset="0" stop-color="#d2d2d2"/><stop offset=".55" stop-color="#8a8a8a"/><stop offset="1" stop-color="#3c3c3c"/></linearGradient></defs>
  <rect width="1360" height="9" fill="#0a0a0b"/><rect width="1360" height="1" fill="#4e4e4e"/>
  <circle cx="21" cy="19" r="17" fill="#5d7893" stroke="#9fb6c9" stroke-width="1.500"/>
  <rect x="70" y="6" width="15" height="6" fill="#d8d29a"/><rect x="70" y="7" width="3" height="3" fill="#3fae3a"/>
  <ellipse cx="146" cy="16" rx="14" ry="12" fill="#7a62ee" stroke="#fff" stroke-width="1.500"/>
  <circle cx="207" cy="17" r="13" fill="#e12a2d"/>
  <circle cx="270" cy="17" r="12" fill="#1f9ad8"/>
  <rect x="303" y="1.500" width="57.500" height="9" rx="2" fill="url(#ab)" stroke="#e0e0e0" stroke-width=".6"/><circle cx="332" cy="17" r="13" fill="#ea1227"/>
  <path d="M379 9l18-5h10v6z" fill="#2856a8"/>
  <rect x="427" y="1.500" width="57.500" height="9" rx="2" fill="url(#ab)" stroke="#e8e8e8" stroke-width=".6"/><ellipse cx="455" cy="16" rx="15" ry="12" fill="#1b5cf2"/>
  <rect x="506.500" y="5" width="22" height="8" fill="#f0c47c" stroke="#a8cdf0" stroke-width="1.500"/>
  <rect x="551.500" y="1.500" width="57" height="9" fill="#191313" stroke="#8e1f1f" stroke-width="1"/><circle cx="580" cy="17" r="12" fill="#f4f4f4"/><circle cx="582" cy="19" r="9" fill="#d82a2a"/>
  <text x="1296" y="16" font-size="11" fill="#fff" font-family="Liberation Sans, sans-serif">12:10</text>
  <rect x="1346.500" y="1" width="14" height="9" fill="#2a2a2e" stroke="#707070" stroke-width=".8"/>
 </svg>

</div>

</div>
</body>
</html>
